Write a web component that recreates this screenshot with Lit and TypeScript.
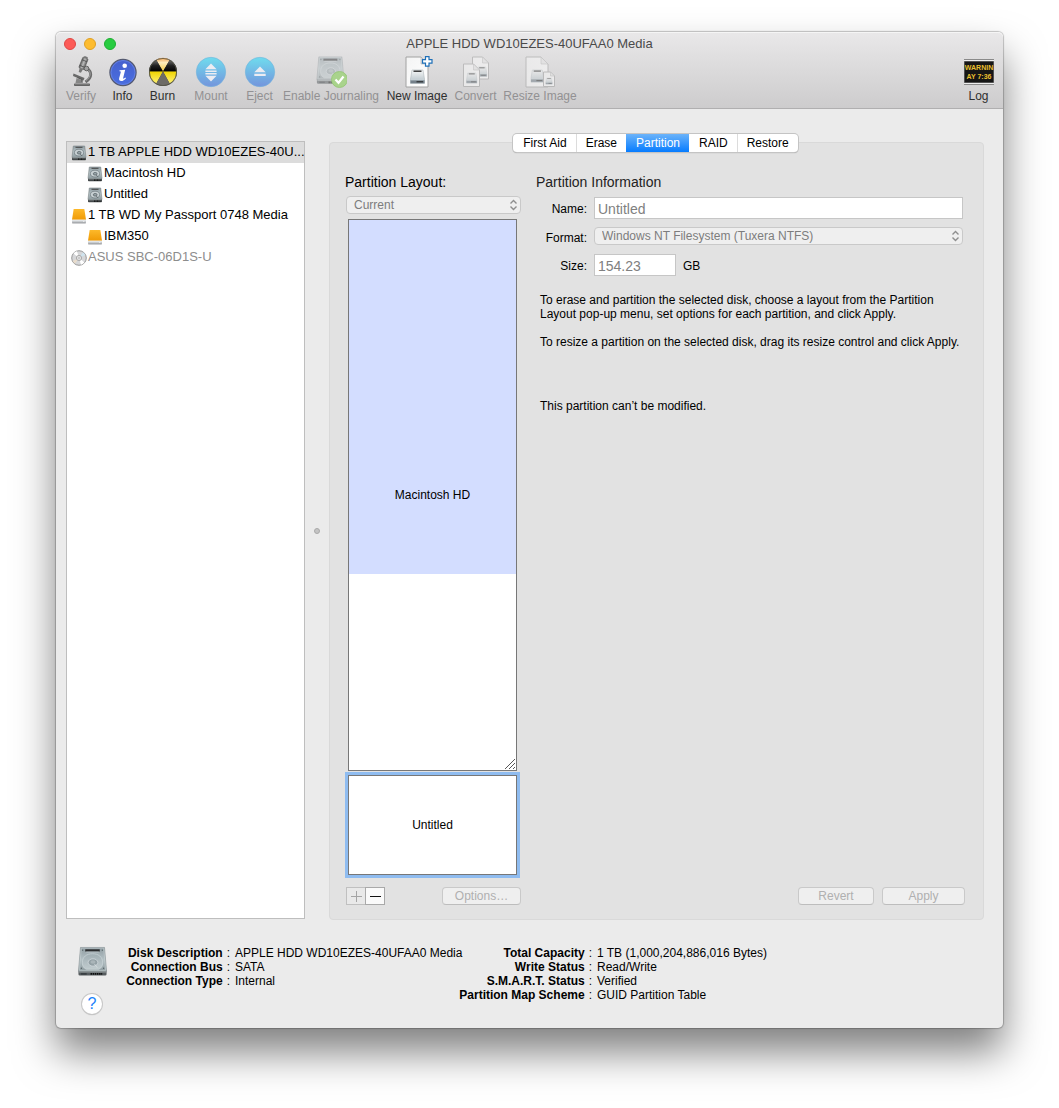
import { LitElement, html, svg, css, nothing } from "lit";
import { customElement, state } from "lit/decorators.js";
import { classMap } from "lit/directives/class-map.js";

const defs = html`
  <svg class="defs" width="0" height="0" aria-hidden="true">
    <defs>
      <linearGradient id="plate" x1="0" y1="0" x2="0" y2="1">
        <stop offset="0" stop-color="#8f9ca1" />
        <stop offset="0.5" stop-color="#b3c0c4" />
        <stop offset="1" stop-color="#8e9b9f" />
      </linearGradient>
      <linearGradient id="platter" x1="0" y1="0" x2="0" y2="1">
        <stop offset="0" stop-color="#a0aeb3" />
        <stop offset="1" stop-color="#c0cbce" />
      </linearGradient>
      <linearGradient id="platePale" x1="0" y1="0" x2="0" y2="1">
        <stop offset="0" stop-color="#f6f7f7" />
        <stop offset="1" stop-color="#aebcc3" />
      </linearGradient>
      <linearGradient id="amber" x1="0" y1="0" x2="0" y2="1">
        <stop offset="0" stop-color="#fdb92a" />
        <stop offset="1" stop-color="#f09a05" />
      </linearGradient>
      <linearGradient id="blueDisc" x1="0" y1="0" x2="0" y2="1">
        <stop offset="0" stop-color="#6fdcee" />
        <stop offset="1" stop-color="#7494dc" />
      </linearGradient>
      <linearGradient id="infoDisc" x1="0" y1="0" x2="0" y2="1">
        <stop offset="0" stop-color="#4560cd" />
        <stop offset="1" stop-color="#4a6ee0" />
      </linearGradient>
      <linearGradient id="burnTop" x1="0" y1="0" x2="0" y2="1">
        <stop offset="0" stop-color="#f0a050" />
        <stop offset="0.35" stop-color="#ffeec0" />
        <stop offset="1" stop-color="#f5c83c" />
      </linearGradient>
      <linearGradient id="burnYellow" x1="0" y1="0" x2="0" y2="1">
        <stop offset="0" stop-color="#f0d400" />
        <stop offset="1" stop-color="#fff27a" />
      </linearGradient>
      <linearGradient id="burnBlack" x1="0" y1="0" x2="0" y2="1">
        <stop offset="0" stop-color="#777" />
        <stop offset="0.5" stop-color="#222" />
        <stop offset="1" stop-color="#000" />
      </linearGradient>
      <linearGradient id="tube" x1="0" y1="0" x2="1" y2="0">
        <stop offset="0" stop-color="#5a5a5a" />
        <stop offset="0.5" stop-color="#bcbcbc" />
        <stop offset="1" stop-color="#5e5e5e" />
      </linearGradient>
      <linearGradient id="page" x1="0" y1="0" x2="1" y2="1">
        <stop offset="0" stop-color="#f4f4f4" />
        <stop offset="1" stop-color="#fff" />
      </linearGradient>
    </defs>
  </svg>
`;

const hddShape = svg`
  <path d="M1.500 25.500h29v3.600q0 1.400-1.400 1.400H2.900q-1.400 0-1.400-1.400z" fill="#565c5f" />
  <path d="M3.600 1.500h24.800L30.500 26H1.500z" fill="url(#plate)" stroke="#808a8e" stroke-width="0.600" />
  <path d="M4.400 2.200h23.200L29.500 25.200H2.500z" fill="none" stroke="#c9d3d6" stroke-width="0.600" />
  <rect x="8.500" y="3.400" width="15" height="2.300" fill="#2b2d2f" />
  <path d="M9.500 6.200h13" stroke="#d5dddf" stroke-width="0.600" />
  <path d="M5.500 17.500C5.500 11 10 8 16 8s10.500 3 10.500 9.500c0 3-1.500 5.500-4 6.500h-13c-2.500-1-4-3.500-4-6.500z" fill="url(#platter)" stroke="#cdd7da" stroke-width="0.700" />
  <ellipse cx="16.500" cy="17" rx="5" ry="3.800" fill="#93a0a5" stroke="#d3dbde" stroke-width="0.800" />
  <ellipse cx="16.500" cy="16.500" rx="2.600" ry="1.800" fill="#aab5b9" />
  <path d="M18 18.500l3 4" stroke="#d3dbde" stroke-width="0.900" />
  <g fill="#546064">
    <circle cx="5.800" cy="4.300" r="0.700" /><circle cx="26.200" cy="4.300" r="0.700" />
    <circle cx="4.500" cy="23" r="0.700" /><circle cx="27.500" cy="23" r="0.700" />
  </g>
  <path d="M2 26.800h28" stroke="#a5adb0" stroke-width="0.900" />
  <path d="M14 28.800h12" stroke="#0c0c0c" stroke-width="1.900" stroke-dasharray="1.500 0.700" />
  <path d="M4 28.800h6" stroke="#30363a" stroke-width="1.300" />
`;

const hdd = (size: number) => html`<svg width=${size} height=${size} viewBox="0 0 32 32" aria-hidden="true">${hddShape}</svg>`;

const smallHdd = html`
  <svg width="16" height="16" viewBox="0 0 16 16" aria-hidden="true">
    <path d="M1 12h14v2.500q0 .8-.8.8H1.800q-.8 0-.8-.8z" fill="#43484a" />
    <path d="M2.300 1h11.400L15 12.500H1z" fill="url(#plate)" stroke="#7c8487" stroke-width="0.600" />
    <path d="M4.500 2.300h7" stroke="#444" stroke-width="1" />
    <ellipse cx="8" cy="7.600" rx="4.600" ry="3.400" fill="#c7d0d3" stroke="#6d777c" stroke-width="0.700" />
    <ellipse cx="8.200" cy="7.800" rx="1.900" ry="1.300" fill="#9aa6ab" stroke="#4d575b" stroke-width="0.700" />
    <path d="M9 8.800l2 2" stroke="#4f595d" stroke-width="0.800" />
    <path d="M1.500 12.900h13" stroke="#a9b1b4" stroke-width="0.700" />
    <path d="M7 14.200h6.500" stroke="#111" stroke-width="1.200" stroke-dasharray="1 0.500" />
  </svg>
`;

const external = html`
  <svg width="16" height="16" viewBox="0 0 16 16" aria-hidden="true">
    <path d="M1 11.500h14v3q0 .8-.8.8H1.800q-.8 0-.8-.8z" fill="#c9cccf" />
    <path d="M1.200 14.900h13.600" stroke="#8e9194" stroke-width="0.900" />
    <path d="M3.300 1h9.400q.6 0 .7.600L15 11.800H1L2.600 1.600Q2.700 1 3.300 1z" fill="url(#amber)" />
    <path d="M1 12.200h14" stroke="#f3f4f5" stroke-width="0.900" />
    <circle cx="12.800" cy="13.600" r="0.500" fill="#fff" />
  </svg>
`;

const disc = html`
  <svg width="16" height="16" viewBox="0 0 16 16" aria-hidden="true">
    <circle cx="8" cy="8" r="7.300" fill="#d6d7d9" stroke="#8f8f8f" stroke-width="0.900" />
    <path d="M8 8L2.500 3.500A7 7 0 0 1 6 1.300z" fill="#fff" />
    <path d="M8 8L13.500 12.500A7 7 0 0 1 10 14.700z" fill="#fff" />
    <path d="M8 8L12 2.300A7 7 0 0 1 14.300 5z" fill="#cfe3ee" />
    <path d="M8 8L4 13.700A7 7 0 0 1 1.700 11z" fill="#e9dccb" />
    <circle cx="8" cy="8" r="2.600" fill="#efefef" stroke="#999" stroke-width="0.800" />
    <circle cx="8" cy="8" r="1" fill="#fff" stroke="#888" stroke-width="0.500" />
  </svg>
`;

const disk = (x: number, y: number, s: number) => svg`
  <g transform="translate(${x} ${y}) scale(${s})">
    <path d="M1.500 0h11L14 9v4.500H0V9z" fill="url(#platePale)" stroke="#a3acb0" stroke-width="0.500" />
    <path d="M3 1.200h8" stroke="#222" stroke-width="1.300" />
    <path d="M0 10h14v3.200H0z" fill="#74808a" />
    <path d="M0 10h14" stroke="#cfd8dc" stroke-width="0.700" />
    <path d="M6 11.800h6.500" stroke="#222" stroke-width="1" />
  </g>
`;

const sheet = (x: number, y: number, w: number, h: number, f: number) => svg`
  <g transform="translate(${x} ${y})">
    <path d="M0 0H${w - f}L${w} ${f}V${h}H0z" fill="url(#page)" stroke="#a2a2a2" stroke-width="1" />
    <path d="M${w - f} 0V${f}H${w}z" fill="#e6e6e6" stroke="#b0b0b0" stroke-width="0.600" />
  </g>
`;

const icons: Record<string, unknown> = {
  verify: html`
    <svg width="32" height="32" viewBox="0 0 32 32" aria-hidden="true">
      <path d="M21.500 12.500c5.500 2.500 6 9-1 13.500" fill="none" stroke="#6c6c6c" stroke-width="3" />
      <path d="M22.500 13c4 3 3.500 8-1.500 11.500" fill="none" stroke="#a8a8a8" stroke-width="0.900" />
      <g transform="rotate(22 18 9)">
        <rect x="15" y="1.500" width="5.600" height="11.500" rx="0.800" fill="url(#tube)" stroke="#5c5c5c" stroke-width="0.600" />
        <rect x="16" y="0" width="3.600" height="1.800" fill="#777" />
        <path d="M15 4.500h5.600M15 10.500h5.600" stroke="#555" stroke-width="0.900" />
        <path d="M16 13h3.600l-.6 4h-2.400z" fill="#777" />
      </g>
      <circle cx="21.500" cy="12.500" r="2.300" fill="#a2a2a2" stroke="#5a5a5a" stroke-width="0.900" />
      <path d="M8.500 17.500l11 4.600-1 2.400-10.500-4.600z" fill="#696969" />
      <path d="M11.500 22l6.500 2.600-2 2.400h-5.500z" fill="#868686" />
      <path d="M12.500 21.500l4.500 2v3.500" fill="none" stroke="#555" stroke-width="1" />
      <rect x="9" y="27.600" width="16" height="2.400" rx="0.800" fill="#646464" />
      <path d="M10 28.100h14" stroke="#9c9c9c" stroke-width="0.600" />
    </svg>
  `,
  info: html`
    <svg width="32" height="32" viewBox="0 0 32 32" aria-hidden="true">
      <circle cx="16" cy="16.500" r="13.100" fill="url(#infoDisc)" stroke="#555a70" stroke-width="1.200" />
      <circle cx="16" cy="16.500" r="12" fill="none" stroke="#6e8ae8" stroke-width="0.700" />
      <circle cx="17.700" cy="9.800" r="2.300" fill="#fff" />
      <path d="M12.600 14.300l5.600-.6-2 8c-.3 1.300.5 1.300 2.200-.2l.6.7c-1.600 1.900-3.100 2.800-4.700 2.800-1.800 0-2.600-1.100-2.100-2.900l1.500-5.600c.2-.9 0-1.200-1.300-1.300z" fill="#fff" />
    </svg>
  `,
  burn: html`
    <svg width="32" height="32" viewBox="0 0 32 32" aria-hidden="true">
      <circle cx="16" cy="16" r="14" fill="#333" />
      <path d="M16 15.500L9.200 3.700A13.600 13.600 0 0 1 22.800 3.700z" fill="url(#burnTop)" />
      <path d="M16 15.500L2.400 15.500A13.600 13.600 0 0 1 9.200 3.700z" fill="url(#burnBlack)" />
      <path d="M16 15.500L29.600 15.500A13.600 13.600 0 0 0 22.800 3.700z" fill="url(#burnBlack)" />
      <path d="M16 15.500H2.400A13.600 13.600 0 0 0 9.200 27.800z" fill="url(#burnYellow)" />
      <path d="M16 15.500H29.600A13.600 13.600 0 0 1 22.800 27.800z" fill="url(#burnYellow)" />
      <path d="M16 15.500L9.200 27.800A13.600 13.600 0 0 0 22.800 27.800z" fill="#6d6b66" />
      <circle cx="16" cy="16" r="13.600" fill="none" stroke="#554" stroke-width="0.800" />
    </svg>
  `,
  mount: html`
    <svg width="32" height="32" viewBox="0 0 32 32" aria-hidden="true">
      <circle cx="16" cy="16" r="14.700" fill="url(#blueDisc)" stroke="#74b4dc" stroke-width="0.600" />
      <path d="M16 7.500l5.600 5.800H10.400zM10.400 14.400h11.200v1.500H10.400zM10.400 17.100h11.200v1.500H10.400zM16 25.500l-5.600-5.800h11.200z" fill="#ececf2" />
    </svg>
  `,
  eject: html`
    <svg width="32" height="32" viewBox="0 0 32 32" aria-hidden="true">
      <circle cx="16" cy="16" r="14.700" fill="url(#blueDisc)" stroke="#74b4dc" stroke-width="0.600" />
      <path d="M16 10.500l5.700 5.700H10.300zM10.300 17.700h11.400v2.300H10.300z" fill="#ececf2" />
    </svg>
  `,
  journal: html`
    <svg width="32" height="32" viewBox="0 0 32 32" aria-hidden="true">
      <g opacity="0.500" transform="translate(0.500 -0.500) scale(0.930)">${hddShape}</g>
      <circle cx="24.500" cy="23.500" r="8" fill="#a9d38c" stroke="#93c474" stroke-width="0.800" />
      <path d="M20.500 23.500l3 3.200 5-6.200" fill="none" stroke="#fff" stroke-width="2.300" />
    </svg>
  `,
  newimage: html`
    <svg width="32" height="32" viewBox="0 0 32 32" aria-hidden="true">
      ${sheet(5, 1, 22, 30, 7)} ${disk(9.500, 14, 1)}
      <path d="M24.500 0.600h3.500v3h3v3.500h-3v3h-3.500v-3h-3v-3.500h3z" fill="#fff" stroke="#1f70b8" stroke-width="1.200" />
    </svg>
  `,
  convert: html`
    <svg width="32" height="32" viewBox="0 0 32 32" aria-hidden="true">
      <g opacity="0.550">
        ${sheet(12.500, 1, 16, 22, 6)} ${disk(17, 11, 0.700)}
        ${sheet(3.500, 8, 16, 22.500, 6)} ${disk(6.500, 17, 0.750)}
      </g>
    </svg>
  `,
  resize: html`
    <svg width="32" height="32" viewBox="0 0 32 32" aria-hidden="true">
      <g opacity="0.550">
        ${sheet(2, 1, 22, 30, 7)} ${disk(7, 14, 0.900)}
        ${sheet(19.500, 16, 11, 14.500, 4)} ${disk(21.800, 22, 0.460)}
      </g>
    </svg>
  `,
  log: html`
    <svg width="32" height="32" viewBox="0 0 32 32" aria-hidden="true">
      <rect x="1" y="3" width="30" height="26" fill="#8a8a8a" />
      <path d="M1 4.500h30M1 27.500h30" stroke="#eee" stroke-width="1.200" />
      <rect x="1.500" y="5.500" width="29" height="21" fill="#161616" />
      <g class="led">
        <text x="16" y="14" text-anchor="middle">WARNIN</text>
        <text x="16" y="23" text-anchor="middle">AY 7:36</text>
      </g>
    </svg>
  `,
};

const arrows = html`
  <svg class="arrows" width="9" height="12" viewBox="0 0 9 12" aria-hidden="true">
    <path d="M1.500 4.500l3-3 3 3M1.500 7.500l3 3 3-3" fill="none" stroke="#8e8e8e" stroke-width="1.400" />
  </svg>
`;

interface Tool { icon: string; label: string; off?: boolean }
interface Device { label: string; kind: "hdd" | "external" | "disc"; child?: boolean; off?: boolean }

const tools: Tool[] = [
  { icon: "verify", label: "Verify", off: true },
  { icon: "info", label: "Info" },
  { icon: "burn", label: "Burn" },
  { icon: "mount", label: "Mount", off: true },
  { icon: "eject", label: "Eject", off: true },
  { icon: "journal", label: "Enable Journaling", off: true },
  { icon: "newimage", label: "New Image" },
  { icon: "convert", label: "Convert", off: true },
  { icon: "resize", label: "Resize Image", off: true },
  { icon: "log", label: "Log" },
];

const devices: Device[] = [
  { label: "1 TB APPLE HDD WD10EZES-40U...", kind: "hdd" },
  { label: "Macintosh HD", kind: "hdd", child: true },
  { label: "Untitled", kind: "hdd", child: true },
  { label: "1 TB WD My Passport 0748 Media", kind: "external" },
  { label: "IBM350", kind: "external", child: true },
  { label: "ASUS SBC-06D1S-U", kind: "disc", off: true },
];

const deviceIcon = { hdd: smallHdd, external, disc };

const partitions = [
  { label: "Macintosh HD", share: 555, used: 64.4, grip: true },
  { label: "Untitled", share: 99, used: 0, grip: false },
];

const facts = [
  [
    ["Disk Description", "APPLE HDD WD10EZES-40UFAA0 Media"],
    ["Connection Bus", "SATA"],
    ["Connection Type", "Internal"],
  ],
  [
    ["Total Capacity", "1 TB (1,000,204,886,016 Bytes)"],
    ["Write Status", "Read/Write"],
    ["S.M.A.R.T. Status", "Verified"],
    ["Partition Map Scheme", "GUID Partition Table"],
  ],
];

@customElement("app-root")
export class AppRoot extends LitElement {
  @state() private device = 0;
  @state() private tab = "Partition";
  @state() private partition = 1;

  static styles = css`
    :host {
      display: flex;
      flex-direction: column;
      box-sizing: border-box;
      min-height: 100vh;
      padding: 32px 56px 80px;
      background: #fff;
      color: #000;
      font: 12px/14px "Liberation Sans", Arial, sans-serif;
    }
    *, *::before, *::after { box-sizing: border-box; }
    svg { display: block; flex: none; }
    button, input, select { font: inherit; color: inherit; margin: 0; padding: 0; border: 0; background: none; border-radius: 0; opacity: 1; }
    button:focus-visible { outline: 2px solid #8fbcf0; }
    .defs { position: absolute; }

    .window {
      flex: 1;
      display: flex;
      flex-direction: column;
      background: #ebebeb;
      border-radius: 5px;
      box-shadow: 0 0 1px 1px rgba(0, 0, 0, 0.22), 0 24px 40px rgba(0, 0, 0, 0.5);
    }
    .header {
      height: 77px;
      background: linear-gradient(#e9e8e9, #cdcccd);
      border-bottom: 1px solid #b0afb0;
      border-radius: 5px 5px 0 0;
      box-shadow: inset 0 1px #f5f5f5;
    }
    .titlebar {
      display: grid;
      grid-template-columns: 1fr auto 1fr;
      align-items: center;
      height: 23px;
      padding: 0 8px;
    }
    .lights { display: flex; gap: 8px; }
    .light { width: 12px; height: 12px; border-radius: 50%; border: 1px solid; }
    .close { background: #fc5b57; border-color: #df4744; }
    .minimize { background: #fdbc30; border-color: #dfa023; }
    .zoom { background: #28cc41; border-color: #1eae32; }
    .title { margin: 0; font-size: 13px; font-weight: 400; line-height: 16px; color: #4a4a4a; }
    .toolbar {
      display: grid;
      grid-template-columns: 38px 45px 35px 62px 35px 108px 64px 53px 76px 1fr;
      padding: 1px 6px 0;
    }
    .tool { display: flex; flex-direction: column; align-items: center; gap: 1px; color: #2f2f2f; white-space: nowrap; }
    .tool:last-child { justify-self: end; width: 37px; }
    .tool:disabled { color: #929193; }
    .led { font: bold 7px "Liberation Sans", sans-serif; fill: #e8bf2e; }

    .body {
      flex: 1;
      display: grid;
      grid-template-columns: 239px 24px minmax(0, 1fr);
      padding: 32px 19px 0 10px;
    }
    .devices {
      margin: 0 0 1px;
      padding: 0;
      list-style: none;
      background: #fff;
      border: 1px solid #bebebe;
      font-size: 13px;
      line-height: 16px;
    }
    .device {
      display: flex;
      align-items: center;
      gap: 1px;
      width: 100%;
      height: 21px;
      padding: 0 0 0 4px;
      text-align: left;
      white-space: nowrap;
    }
    .child { padding-left: 20px; }
    .selected { background: #dcdcdc; }
    .off { color: #8d8d8d; }
    .device span { padding-bottom: 2px; }
    .splitter { display: grid; place-items: center; }
    .knob { width: 6px; height: 6px; border-radius: 50%; background: #c4c4c4; border: 1px solid #a9a9a9; }

    .panel {
      display: flex;
      flex-direction: column;
      margin-top: 1px;
      background: #e2e2e2;
      border: 1px solid #d9d9d9;
      border-radius: 4px;
      padding: 0 18px 14px 16px;
    }
    .tabs {
      align-self: center;
      display: flex;
      height: 18px;
      margin-top: -9px;
      background: #fff;
      border-radius: 4px;
      box-shadow: 0 0 0 1px #c4c4c4, 0 1px 1px #999;
      overflow: hidden;
    }
    .tab { padding: 0 9px; border-left: 1px solid #dcdcdc; line-height: 18px; }
    .tab:first-child, .active, .active + .tab { border-left-color: transparent; }
    .active { color: #fff; background: linear-gradient(#6bb3fa, #067cff); background-origin: border-box; }
    .columns { flex: 1; display: grid; grid-template-columns: 175px minmax(0, 1fr); gap: 15px; padding-top: 22px; }
    .layout { display: flex; flex-direction: column; }
    .heading { display: block; margin: 0 0 6px -1px; font-size: 14px; font-weight: 400; line-height: 16px; }
    .popup { display: grid; align-items: center; }
    .popup select, .popup .arrows { grid-area: 1 / 1; }
    .popup select {
      appearance: none;
      width: 100%;
      height: 18px;
      padding: 0 20px 0 7px;
      border: 1px solid #c9c9c9;
      border-radius: 4px;
      background: #efefef;
      color: #7d7d7d;
    }
    .popup .arrows { justify-self: end; margin-right: 3px; pointer-events: none; }
    .map { flex: 1; display: flex; flex-direction: column; gap: 4px; margin: 5px 4px 12px 2px; }
    .partition { position: relative; display: grid; place-items: center; background: #fff; border: 1px solid #777; }
    .current { box-shadow: 0 0 0 3px #8fbcf0; }
    .used { position: absolute; inset: 0 0 auto; background: #d3ddff; }
    .partition span { position: relative; }
    .grip { position: absolute; right: 0; bottom: 0; }
    .actions { display: flex; align-items: center; }
    .square { display: grid; place-items: center; width: 20px; height: 18px; background: #fafafa; border: 1px solid #a9a9a9; }
    .square:disabled { background: #e9e9e9; border-color: #c0c0c0; border-right: 0; width: 19px; }
    .push {
      height: 18px;
      border: 1px solid #c9c9c9;
      border-bottom-color: #bdbdbd;
      border-radius: 4px;
      background: #efefef;
      color: #b0b0b0;
      line-height: 16px;
    }
    .options { width: 79px; margin-left: auto; }
    .revert { width: 76px; }
    .apply { width: 83px; }

    .info { display: flex; flex-direction: column; }
    .info .heading { margin: 0 0 7px; color: #222; }
    .form { display: grid; grid-template-columns: 51px minmax(0, 1fr); column-gap: 7px; row-gap: 8px; align-items: center; margin-right: 2px; }
    .form label { text-align: right; padding-top: 2px; }
    .form .popup { padding-bottom: 1px; }
    .field { height: 22px; width: 100%; padding: 2px 3px 0; border: 1px solid #c6c6c6; background: #fff; color: #808080; font-size: 14px; }
    .size { display: flex; align-items: center; gap: 7px; }
    .size .field { width: 82px; }
    .size span { padding-top: 2px; }
    .note { margin: 17px 0 0 4px; }
    .note p { margin: 0 0 14px; }
    .note .state { margin-top: 50px; }
    .end { display: flex; justify-content: flex-end; gap: 8px; margin-top: auto; }

    .footer { display: grid; grid-template-columns: 72px 332px minmax(0, 1fr); height: 108px; padding-top: 26px; }
    .side { display: flex; flex-direction: column; align-items: center; gap: 17px; }
    .help {
      width: 20px;
      height: 20px;
      border-radius: 50%;
      background: #fff;
      box-shadow: 0 0 0 1px #c8c8c8, 0 1px 1px #999;
      color: #1a82fb;
      font-size: 16px;
      line-height: 20px;
    }
    .facts { display: grid; grid-template-columns: 102px 1fr; column-gap: 5px; align-content: start; margin: 0; white-space: nowrap; }
    .facts.wide { grid-template-columns: 132px 1fr; }
    .facts dt { display: flex; justify-content: flex-end; gap: 4px; font-weight: 700; }
    .facts dt span { font-weight: 400; }
    .facts dd { margin: 0; }
  `;

  render() {
    return html`
      ${defs}
      <main class="window">
        <header class="header">
          <div class="titlebar">
            <div class="lights">
              <button class="light close" aria-label="Close"></button>
              <button class="light minimize" aria-label="Minimize"></button>
              <button class="light zoom" aria-label="Zoom"></button>
            </div>
            <h1 class="title">APPLE HDD WD10EZES-40UFAA0 Media</h1>
          </div>
          <div class="toolbar">
            ${tools.map((t) => html`
              <button class="tool" ?disabled=${!!t.off}>${icons[t.icon]}<span>${t.label}</span></button>
            `)}
          </div>
        </header>

        <div class="body">
          <ul class="devices" aria-label="Disks">
            ${devices.map((d, i) => html`
              <li>
                <button
                  class=${classMap({ device: true, child: !!d.child, off: !!d.off, selected: i === this.device })}
                  @click=${() => (this.device = i)}
                >${deviceIcon[d.kind]}<span>${d.label}</span></button>
              </li>
            `)}
          </ul>
          <div class="splitter"><div class="knob"></div></div>

          <section class="panel">
            <div class="tabs" role="tablist">
              ${["First Aid", "Erase", "Partition", "RAID", "Restore"].map((t) => html`
                <button
                  role="tab"
                  aria-selected=${t === this.tab ? "true" : "false"}
                  class=${classMap({ tab: true, active: t === this.tab })}
                  @click=${() => (this.tab = t)}
                >${t}</button>
              `)}
            </div>
            <div class="columns">
              <div class="layout">
                <label class="heading" for="layout">Partition Layout:</label>
                <div class="popup">
                  <select id="layout" disabled><option>Current</option></select>
                  ${arrows}
                </div>
                <div class="map">
                  ${partitions.map((p, i) => html`
                    <button
                      class=${classMap({ partition: true, current: i === this.partition })}
                      style="flex: ${p.share} 0 0"
                      @click=${() => (this.partition = i)}
                    >
                      ${p.used ? html`<div class="used" style="height: ${p.used}%"></div>` : nothing}
                      <span>${p.label}</span>
                      ${p.grip ? html`
                        <svg class="grip" width="12" height="12" viewBox="0 0 12 12" aria-hidden="true">
                          <path d="M1 11L11 1M5 11l6-6M9 11l2-2" stroke="#444" stroke-width="0.900" />
                        </svg>
                      ` : nothing}
                    </button>
                  `)}
                </div>
                <div class="actions">
                  <button class="square" disabled aria-label="Add partition">
                    <svg width="13" height="13" viewBox="0 0 13 13"><path d="M1 6.500h11M6.500 1v11" stroke="#a4a4a4" /></svg>
                  </button>
                  <button class="square" aria-label="Remove partition">
                    <svg width="13" height="13" viewBox="0 0 13 13"><path d="M1 6.500h11" stroke="#111" /></svg>
                  </button>
                  <button class="push options" disabled>Options…</button>
                </div>
              </div>

              <div class="info">
                <h2 class="heading">Partition Information</h2>
                <div class="form">
                  <label for="name">Name:</label>
                  <input id="name" class="field" value="Untitled" disabled />
                  <label for="format">Format:</label>
                  <div class="popup">
                    <select id="format" disabled><option>Windows NT Filesystem (Tuxera NTFS)</option></select>
                    ${arrows}
                  </div>
                  <label for="size">Size:</label>
                  <div class="size"><input id="size" class="field" value="154.23" disabled /><span>GB</span></div>
                </div>
                <div class="note">
                  <p>To erase and partition the selected disk, choose a layout from the Partition Layout pop-up menu, set options for each partition, and click Apply.</p>
                  <p>To resize a partition on the selected disk, drag its resize control and click Apply.</p>
                  <p class="state">This partition can’t be modified.</p>
                </div>
                <div class="end">
                  <button class="push revert" disabled>Revert</button>
                  <button class="push apply" disabled>Apply</button>
                </div>
              </div>
            </div>
          </section>
        </div>

        <footer class="footer">
          <div class="side">${hdd(31)}<button class="help" aria-label="Help">?</button></div>
          ${facts.map((group, i) => html`
            <dl class=${classMap({ facts: true, wide: i === 1 })}>
              ${group.map(([k, v]) => html`<dt>${k}<span>:</span></dt><dd>${v}</dd>`)}
            </dl>
          `)}
        </footer>
      </main>
    `;
  }
}
